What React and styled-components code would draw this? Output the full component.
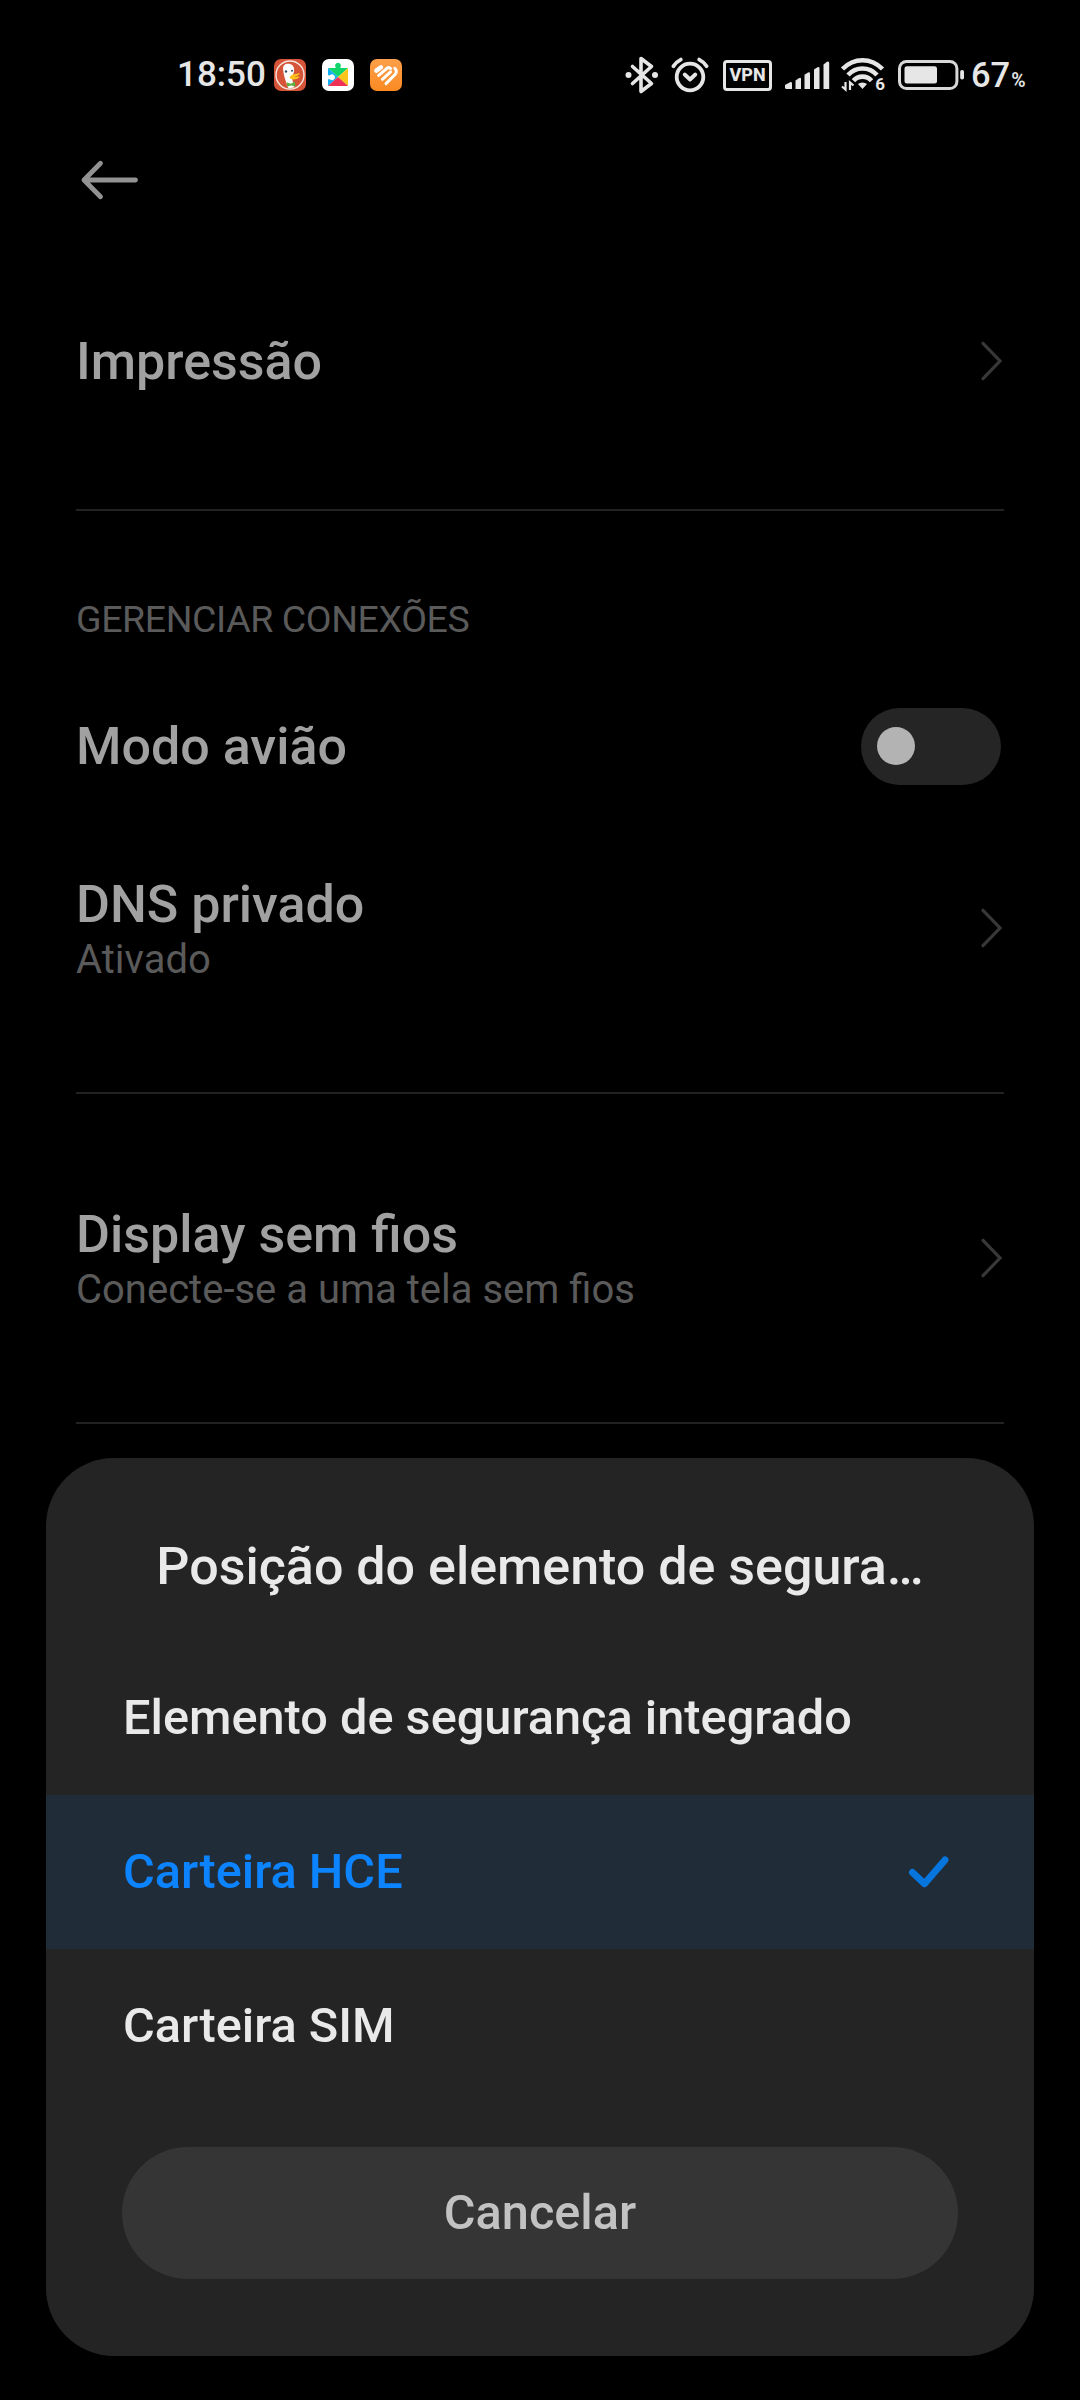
import React from "react";
import styled, { createGlobalStyle } from "styled-components";

const Global = createGlobalStyle`
  *, *::before, *::after { box-sizing: border-box; }
  html, body { margin: 0; background: #000; }
  body { font-family: Roboto, "Noto Sans", sans-serif; }
`;

const Screen = styled.main`
  position: relative;
  width: 1080px;
  height: 2400px;
  overflow: hidden;
  background: #000;
`;

const StatusBar = styled.header`
  display: flex;
  align-items: center;
  justify-content: space-between;
  height: 150px;
  padding: 0 54px 0 177px;
  color: #e6e6e6;
`;

const StatusGroup = styled.div`
  display: flex;
  align-items: center;
`;

const Clock = styled.span`
  width: 97px;
  font-size: 35px;
  line-height: 40px;
  font-weight: 500;
`;

const AppIcon = styled.svg`
  width: 32px;
  height: 32px;
  margin-right: 16px;
`;

const Glyph = styled.svg`
  display: block;
  width: ${(p) => p.$w}px;
  height: ${(p) => p.$h}px;
  margin-right: ${(p) => p.$gap || 0}px;
  flex: none;
  overflow: visible;
`;

const VpnBadge = styled.span`
  display: flex;
  align-items: center;
  justify-content: center;
  width: 49px;
  height: 31px;
  margin-right: 13px;
  border: 3px solid #e6e6e6;
  border-radius: 4px;
  font-size: 18px;
  line-height: 20px;
  font-weight: 800;
`;

const Battery = styled.span`
  width: 55px;
  height: 40px;
  font-size: 34.5px;
  line-height: 40px;
  font-weight: 500;
  white-space: nowrap;
`;

const Percent = styled.span`
  margin-left: 1px;
  font-size: 19.5px;
  line-height: 1;
  font-weight: 600;
`;

const Toolbar = styled.nav`
  display: flex;
  align-items: center;
  height: 60px;
  padding-left: 80px;
`;

const List = styled.div`
  display: flex;
  flex-direction: column;
  padding: 0 76px;
`;

const Section = styled.section`
  display: flex;
  flex-direction: column;
  padding: ${(p) => p.$pad};
  border-bottom: 2px solid #222;
`;

const SectionLabel = styled.h2`
  margin: 0;
  height: 76px;
  font-size: 37.5px;
  line-height: 76px;
  font-weight: 400;
  letter-spacing: -0.4px;
  text-transform: uppercase;
  color: #5a5a5a;
`;

const Row = styled.div`
  display: flex;
  align-items: center;
  justify-content: space-between;
  height: ${(p) => p.$h}px;
`;

const RowText = styled.div`
  display: flex;
  flex-direction: column;
`;

const RowTitle = styled.span`
  font-size: 52px;
  line-height: 63px;
  font-weight: 500;
  color: #a1a1a1;
`;

const RowSummary = styled.span`
  font-size: 40px;
  line-height: 48px;
  color: #5a5a5a;
`;

const Toggle = styled.span`
  display: flex;
  align-items: center;
  width: 140px;
  height: 77px;
  margin-right: 3px;
  padding: 0 0 1px 16px;
  border-radius: 39px;
  background: #252525;
`;

const Knob = styled.span`
  width: 38px;
  height: 38px;
  border-radius: 50%;
  background: #b3b3b3;
`;

const Sheet = styled.div`
  position: absolute;
  left: 46px;
  top: 1458px;
  width: 988px;
  height: 898px;
  display: flex;
  flex-direction: column;
  border-radius: 68px;
  overflow: hidden;
  background: #242424;
`;

const SheetTitle = styled.h1`
  margin: 0;
  padding: 78px 0 43px;
  font-size: 52px;
  line-height: 62px;
  font-weight: 500;
  text-align: center;
  color: #e9e9e9;
`;

const Option = styled.div`
  display: flex;
  align-items: center;
  justify-content: space-between;
  height: 154px;
  padding: 0 85px 0 77px;
  font-size: 48.7px;
  line-height: 60px;
  font-weight: 500;
  color: ${(p) => (p.$selected ? "#0d84ff" : "#e9e9e9")};
  background: ${(p) => (p.$selected ? "#212c39" : "transparent")};
`;

const CancelButton = styled.button`
  height: 132px;
  margin: 44px 76px 0;
  padding: 0;
  border: 0;
  border-radius: 66px;
  background: #353535;
  color: #c2c2c2;
  font-family: inherit;
  font-size: 48.7px;
  line-height: 60px;
  font-weight: 500;
`;

const Chevron = () => (
  <Glyph $w={24} $h={44} $gap={1} viewBox="0 0 24 44" fill="none" stroke="#383838" strokeWidth="3.2" strokeLinecap="round" strokeLinejoin="miter">
    <path d="M4 4.3 21 22 4 39.7" />
  </Glyph>
);

const BackArrow = () => (
  <Glyph $w={60} $h={40} viewBox="0 0 60 40" fill="none" stroke="#929292" strokeWidth="4.8" strokeLinecap="round" strokeLinejoin="round">
    <path d="M55.5 20H4M20.5 3.2 4 20l16.5 16.8" />
  </Glyph>
);

const CheckMark = () => (
  <Glyph $w={42} $h={34} viewBox="0 0 42 34" fill="none" stroke="#0675de" strokeWidth="7" strokeLinecap="round" strokeLinejoin="round">
    <path d="M5.5 17.5 17.5 28.7 38 5" />
  </Glyph>
);

const DuckIcon = () => (
  <AppIcon viewBox="0 0 32 32">
    <rect width="32" height="32" rx="7" fill="#d65437" />
    <circle cx="16" cy="16" r="14" fill="none" stroke="#f6e6e1" strokeWidth="1.4" />
    <path d="M9 9.5C9 5 13 4 16 5c3.500 1 4.500 4 4 7.500-.3 2-1.500 3.500-1.800 5.500-.3 3 1.500 7 2.300 10.300-2.500 1-4.500.9-6.500.5C12.500 24 9.500 17 9 9.500z" fill="#fff" />
    <circle cx="12" cy="12.5" r="1.2" fill="#344b67" />
    <circle cx="18" cy="11.8" r="1" fill="#344b67" />
    <path d="M16 17.500c2-2.500 5.500-2.200 9.500-3.500 1 1-2 3-5 3.500 1.500.5 4-.2 5.200.3-1 2-5 3.200-7.500 2.500-2-.4-3-1.500-2.200-2.800z" fill="#fdc21b" />
    <path d="M12.800 23.200l3.900 1.500 4.300-2 .4 4.700-4.300-1-4 1z" fill="#5cb143" />
  </AppIcon>
);

const PlayServicesIcon = () => (
  <AppIcon viewBox="0 0 32 32">
    <rect width="32" height="32" rx="7" fill="#fff" />
    <path d="M6 9h20l-10 9z" fill="#11d56b" />
    <path d="M13.600 11V8.300a2.900 2.900 0 1 1 4.800 0V11z" fill="#11d56b" />
    <path d="M6 9l10 9-10 9z" fill="#12aef3" />
    <path d="M26 9v18l-10-9z" fill="#fcc51c" />
    <path d="M6 27l10-9 10 9z" fill="#ee3055" />
    <path d="M5 16.300h3a2.800 2.800 0 1 1 0 3.900H5z" fill="#fff" />
  </AppIcon>
);

const FitnessIcon = () => (
  <AppIcon viewBox="0 0 32 32">
    <defs>
      <linearGradient id="fitnessFill" x1="0" y1="0" x2="0" y2="1">
        <stop offset="0" stopColor="#fda04a" />
        <stop offset="1" stopColor="#fb8a22" />
      </linearGradient>
    </defs>
    <rect width="32" height="32" rx="7" fill="url(#fitnessFill)" />
    <g fill="none" stroke="#fff" strokeWidth="3" strokeLinecap="round" strokeLinejoin="round">
      <path d="M6.300 11.600 11 8.200" strokeWidth="4.400" />
      <path d="M8.700 16.400 17 9.300" />
      <path d="M12.400 20.300 20.600 12.800" />
      <path d="M16 24.600 25.300 15.300Q27.500 11.500 24.800 9.300" />
      <path d="M17 9.300q2-1.500 3.600.3" />
    </g>
  </AppIcon>
);

const BluetoothIcon = () => (
  <Glyph $w={34} $h={38} $gap={12} viewBox="0 0 34 38" fill="none" stroke="#e6e6e6" strokeWidth="3.6" strokeLinejoin="round" strokeLinecap="round">
    <path d="M7.500 10.500 26.500 27.500 16 35.500V2.500L26.500 10.500 7.500 27.500" />
    <circle cx="3.500" cy="19" r="3" fill="#e6e6e6" stroke="none" />
    <circle cx="30" cy="19" r="3" fill="#e6e6e6" stroke="none" />
  </Glyph>
);

const AlarmIcon = () => (
  <Glyph $w={38} $h={36} $gap={14} viewBox="0 0 38 36" fill="none" stroke="#e6e6e6" strokeWidth="3.8" strokeLinecap="round" strokeLinejoin="round">
    <circle cx="19" cy="20" r="13.300" />
    <path d="M13.700 17.500 19 22.500 24.300 17.500" />
    <path d="M2.400 9.200Q5 5 9.800 2.600M35.600 9.200Q33 5 28.200 2.600" />
  </Glyph>
);

const SignalIcon = () => (
  <Glyph $w={45} $h={30} $gap={11} viewBox="0 0 45 30" fill="#e6e6e6">
    <path d="M0 25 5 22.200Q7 21.500 7 23.500V29H1.500Q0 29 0 27.500z" />
    <path d="M10.500 20.500 14 18.200Q16 17.200 16 19V29H10.500z" />
    <path d="M19.500 14.800 23 12.600Q25 11.800 25 13.500V29H19.500z" />
    <path d="M29 9.500 32.500 7.300Q34.500 6.500 34.500 8.500V29H29z" />
    <path d="M38.500 4.500 42 1.800Q44.200.8 44.200 3V29H38.500z" />
  </Glyph>
);

const WifiText = styled.text`
  font-family: Roboto, sans-serif;
  font-size: 17px;
  font-weight: 700;
`;

const WifiIcon = () => (
  <Glyph $w={44} $h={34} $gap={13} viewBox="0 0 44 34" fill="none" stroke="#e6e6e6" strokeWidth="4.6">
    <path d="M1.500 11Q10 2.200 21.500 2.200T41.500 11" />
    <path d="M7 17Q13 10.500 21.500 10.500T36 17" />
    <path d="M12.500 22.700Q16 18.600 21.500 18.600T30.500 22.700" />
    <path d="M21.500 24.500q2.800 0 4.500 1.600L21.500 31 17 26.100q1.700-1.600 4.500-1.600z" fill="#e6e6e6" stroke="none" />
    <path d="M4.500 24v7.500L1 28.500M9 32v-7.500l3.500 3" strokeWidth="2.2" />
    <WifiText x="34.2" y="32.3" fill="#e6e6e6" stroke="none">6</WifiText>
  </Glyph>
);

const BatteryIcon = () => (
  <Glyph $w={66} $h={30} $gap={7} viewBox="0 0 66 30" fill="none">
    <rect x="1.5" y="1.5" width="57.4" height="27" rx="7" stroke="#d8d8d8" strokeWidth="3" />
    <rect x="6.5" y="6.2" width="32.500" height="17.300" rx="2.5" fill="#e6e6e6" />
    <rect x="62.2" y="10" width="3.8" height="9.5" rx="1.8" fill="#e6e6e6" />
  </Glyph>
);

const options = ["Elemento de segurança integrado", "Carteira HCE", "Carteira SIM"];

const LinkRow = ({ title, summary, height }) => (
  <Row $h={height}>
    <RowText>
      <RowTitle>{title}</RowTitle>
      {summary && <RowSummary>{summary}</RowSummary>}
    </RowText>
    <Chevron />
  </Row>
);

export default function App() {
  return (
    <Screen>
      <Global />
      <StatusBar>
        <StatusGroup>
          <Clock>18:50</Clock>
          <DuckIcon />
          <PlayServicesIcon />
          <FitnessIcon />
        </StatusGroup>
        <StatusGroup>
          <BluetoothIcon />
          <AlarmIcon />
          <VpnBadge>VPN</VpnBadge>
          <SignalIcon />
          <WifiIcon />
          <BatteryIcon />
          <Battery>67<Percent>%</Percent></Battery>
        </StatusGroup>
      </StatusBar>
      <Toolbar>
        <BackArrow />
      </Toolbar>
      <List>
        <Section $pad="74px 0 71px">
          <LinkRow title="Impressão" height={154} />
        </Section>
        <Section $pad="70px 0 72px">
          <SectionLabel>Gerenciar conexões</SectionLabel>
          <Row $h={179}>
            <RowTitle>Modo avião</RowTitle>
            <Toggle>
              <Knob />
            </Toggle>
          </Row>
          <LinkRow title="DNS privado" summary="Ativado" height={184} />
        </Section>
        <Section $pad="72px 0 72px">
          <LinkRow title="Display sem fios" summary="Conecte-se a uma tela sem fios" height={184} />
        </Section>
      </List>
      <Sheet role="dialog">
        <SheetTitle>Posição do elemento de segura…</SheetTitle>
        {options.map((name) => {
          const selected = name === "Carteira HCE";
          return (
            <Option key={name} $selected={selected}>
              <span>{name}</span>
              {selected && <CheckMark />}
            </Option>
          );
        })}
        <CancelButton>Cancelar</CancelButton>
      </Sheet>
    </Screen>
  );
}
